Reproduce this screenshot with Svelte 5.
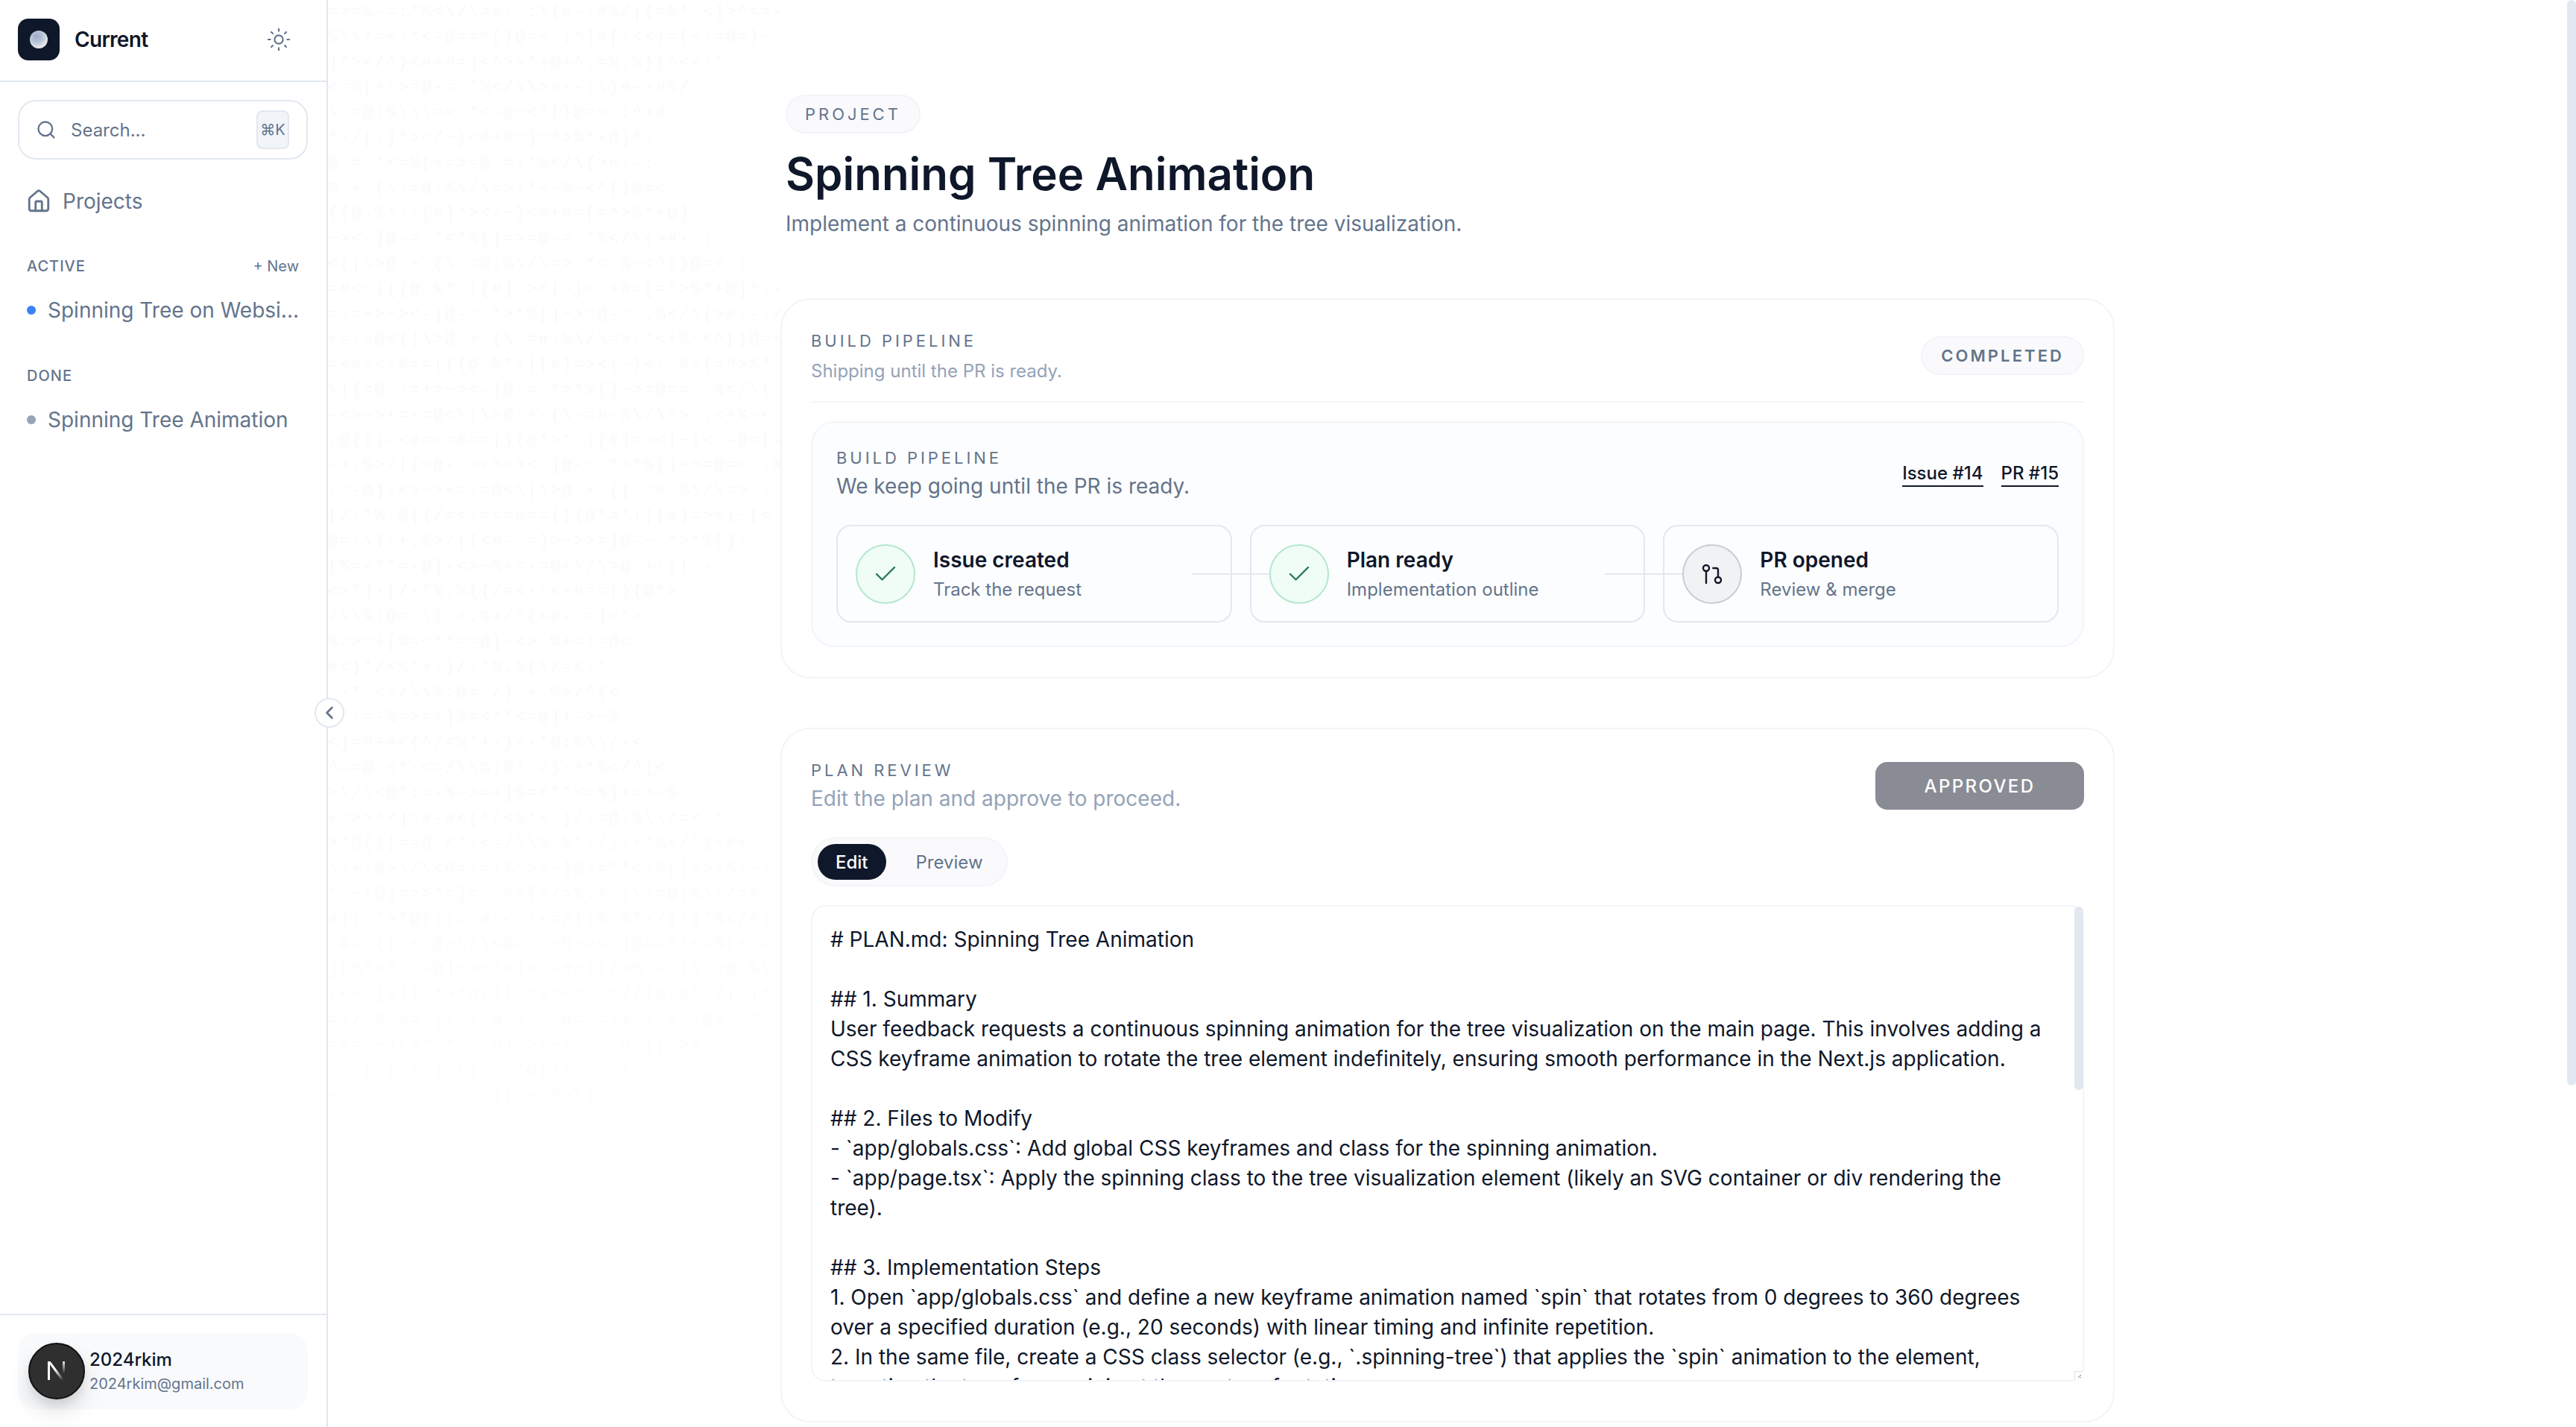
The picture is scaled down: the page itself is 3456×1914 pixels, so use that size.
<script>
	// Faint ascii texture that sits behind the main column
	const asciiRows = String.raw`=>=%-=:*%<\/\>#·-:\{#-·#%/|{=%*.<]>^<=-
%\\/=<:*<-@==^[}@=<.:^]#[-<<|=[<:=@=}~
]*></^}<#+#=]<^>>*+@+^.=%.%}[^<<·*
<=%[+=>=@-=:*%</\\>#·-:\}#-·#%/
\·=@:%\\\=<:*<-@~<^[}@=<.:^+#
*·/[·]*></~}<#+#=]=^>%*+@]^.
@-=.*<=%[+=>=@-=:*%</\{>#·-:
%.+·{\·=@:%\/\=>:*<-%~<^[}@=<
{{@.%*·/[#]*></~}<#+#=[=^>%*+@]
~><-]@-=.*<*%[]=>=@-=:*%</\{>#·-:
<{|\>@.+·{\·=@:%\/\=>:*<-%~<^[}@=<.:
=#<=|{{@.%*·|[#]=><|~}<·+#=[=^>%*+@]^.-
=·=+>~><-]@-=.*>*%[]~>=@-=..%</\{>#·-:/
+=·=@<{|\>@.+·{\·=#·%\/\=>:*<+%~<^[}@=<
=<#=<=#==|{{@.%*:|[#]=><|~}<·-#=[=^>%*
\|{<@-·=+>~><-]@-=.*>*%[]~>=@==..%</\{
-<>~>+=·=@<\|\>@:+·{\·=#·%\/\=>..<+%~<
.@{{|=<#=<=#==|}{@*>*:|[#]=><|~}<·-@=[-
·+.%>/|{<@-·=+>~><=]@-~.*>*%[]~>=@==..%
.=-@]-<>~>+=·=@<\|\>@:+·{{·=#·%\/\=>..
[/·*%.@{{/=<·=<=#==|}{@*>*:|[#]=><|~[<
@=·\}·+.%>/|{<#-·=]>~>>=]@-~.*>*%[]-
[%=<**=-@]-<>~%+=·=@<\/\>@:+·{|·-
<>*]·[/·*%.%{{/=<·=<-#==|}{@*>
/\\%:@=·\}·+.%>/^{<#-·=]<^>
%=>=+[%=<**==@]-<>-%+=:=@<
#<}^/<%*+·}/·*%.%{\/=<·*
 ·*·<=/\\%:@=·/}·+.%>/^{<
 *:=-%=>=+]%=<**<=@]+->~%
<]=#+#<{^/<%*+·}/·*@:%\\/-<
^==@-<*·<=/\\%:@*·/}·+*%</^{<
>\/\<@*:=-%~>=+]%=<**<=%]+=>-%
+=>>^<]=#-#<{^/<%*+·}/·=@:%\\/=<·*
>*@{}|==@-<*·<=/\\%.%*·/}·+*%</^}<#+
\·+:@>\/\<@=:=+%~>=-]@==**<=%[|=>=%-~:
*.~+@]=>>^<]=·-#<{^/>%.+·}\·=@:%\\/=<:
#]|:*>*@{}|==#-<=·<=/{{%.%*·/}·]*%</^}
·#=·{{·+:@>\/\<@=:=+%~><-]@==**<=%[+->
][%*>*.~+@]=>>^<]=·-#<{|/>%.+·}\·=@:%\
|<<=]#]|:*>*@{}|==#=<=·<=/{{@.%*·/|·|*
=\/\%·#=·{{·+:@>\/\<@=·=+%~>><-]@=-.*
=#=>~][%*>*.~-@]=>>~>+=·-@<{|/>%.
-·<[~|<>=]#[|:*>*@{}|==#=<=·<
+<..>-\/\%·#=·{{·+:@>\|\<`;

	const planText = `# PLAN.md: Spinning Tree Animation

## 1. Summary
User feedback requests a continuous spinning animation for the tree visualization on the main page. This involves adding a CSS keyframe animation to rotate the tree element indefinitely, ensuring smooth performance in the Next.js application.

## 2. Files to Modify
- \`app/globals.css\`: Add global CSS keyframes and class for the spinning animation.
- \`app/page.tsx\`: Apply the spinning class to the tree visualization element (likely an SVG container or div rendering the tree).

## 3. Implementation Steps
1. Open \`app/globals.css\` and define a new keyframe animation named \`spin\` that rotates from 0 degrees to 360 degrees over a specified duration (e.g., 20 seconds) with linear timing and infinite repetition.
2. In the same file, create a CSS class selector (e.g., \`.spinning-tree\`) that applies the \`spin\` animation to the element,
targeting the transform-origin at the center of rotation.`;

	const steps = [
		{ title: 'Issue created', sub: 'Track the request', done: true },
		{ title: 'Plan ready', sub: 'Implementation outline', done: true },
		{ title: 'PR opened', sub: 'Review & merge', done: false }
	];
</script>

<div class="app">
	<aside class="sidebar">
		<header class="brand">
			<div class="brand-left">
				<span class="logo"><span class="orb"></span></span>
				<span class="brand-name">Current</span>
			</div>
			<svg class="sun" width="34" height="34" viewBox="0 0 24 24" fill="none" stroke="currentColor" stroke-width="1.5" stroke-linecap="round" stroke-linejoin="round">
				<circle cx="12" cy="12" r="4" />
				<path d="M12 2v2M12 20v2M4.93 4.93l1.41 1.41M17.66 17.66l1.41 1.41M2 12h2M20 12h2M6.34 17.66l-1.41 1.41M19.07 4.93l-1.41 1.41" />
			</svg>
		</header>

		<div class="search">
			<svg width="28" height="28" viewBox="0 0 24 24" fill="none" stroke="currentColor" stroke-width="2" stroke-linecap="round" stroke-linejoin="round">
				<path d="m21 21-4.34-4.34" />
				<circle cx="11" cy="11" r="8" />
			</svg>
			<span class="search-text">Search...</span>
			<kbd>⌘K</kbd>
		</div>

		<nav class="nav-item">
			<svg width="34" height="34" viewBox="0 0 24 24" fill="none" stroke="currentColor" stroke-width="2" stroke-linecap="round" stroke-linejoin="round">
				<path d="M15 21v-8a1 1 0 0 0-1-1h-4a1 1 0 0 0-1 1v8" />
				<path d="M3 10a2 2 0 0 1 .709-1.528l7-5.999a2 2 0 0 1 2.582 0l7 5.999A2 2 0 0 1 21 10v9a2 2 0 0 1-2 2H5a2 2 0 0 1-2-2z" />
			</svg>
			<span>Projects</span>
		</nav>

		<section class="group active-group">
			<div class="group-head">
				<span>ACTIVE</span>
				<span class="new">+ New</span>
			</div>
			<div class="project"><i class="dot blue"></i><span class="project-name">Spinning Tree on Websi...</span></div>
		</section>

		<section class="group done-group">
			<div class="group-head"><span>DONE</span></div>
			<div class="project"><i class="dot"></i><span class="project-name">Spinning Tree Animation</span></div>
		</section>

		<footer class="user-area">
			<div class="user-card">
				<div class="avatar">
					<!-- Next.js mark -->
					<svg width="26" height="28" viewBox="0 0 26 28">
						<defs>
							<linearGradient id="diag" x1="0" y1="0" x2="0.75" y2="1">
								<stop offset="0.45" stop-color="#ffffff" />
								<stop offset="1" stop-color="#ffffff" stop-opacity="0" />
							</linearGradient>
							<linearGradient id="side" x1="0" y1="0" x2="0" y2="1">
								<stop offset="0" stop-color="#ffffff" stop-opacity="0.9" />
								<stop offset="1" stop-color="#ffffff" stop-opacity="0" />
							</linearGradient>
						</defs>
						<rect x="1" y="1" width="3" height="25" fill="#ffffff" />
						<polygon points="1,1 4.5,1 25,28 20.5,28" fill="url(#diag)" />
						<rect x="21" y="1" width="3" height="16" fill="url(#side)" />
					</svg>
				</div>
				<div class="user-text">
					<div class="user-name">2024rkim</div>
					<div class="user-mail">2024rkim@gmail.com</div>
				</div>
			</div>
		</footer>

		<button class="collapse" aria-label="Collapse sidebar">
			<svg width="28" height="28" viewBox="0 0 24 24" fill="none" stroke="currentColor" stroke-width="2.2" stroke-linecap="round" stroke-linejoin="round">
				<path d="m15 18-6-6 6-6" />
			</svg>
		</button>
	</aside>

	<main class="main">
		<pre class="ascii" aria-hidden="true">{asciiRows}</pre>

		<div class="column">
			<div class="page-head">
				<span class="pill project-pill">PROJECT</span>
				<h1>Spinning Tree Animation</h1>
				<p>Implement a continuous spinning animation for the tree visualization.</p>
			</div>

			<section class="card">
				<div class="card-head divided">
					<div>
						<div class="eyebrow">BUILD PIPELINE</div>
						<div class="card-sub small">Shipping until the PR is ready.</div>
					</div>
					<span class="pill status">COMPLETED</span>
				</div>

				<div class="pipeline">
					<div class="pipeline-head">
						<div>
							<div class="eyebrow">BUILD PIPELINE</div>
							<div class="pipeline-sub">We keep going until the PR is ready.</div>
						</div>
						<div class="links">
							<a href="#issue">Issue #14</a>
							<a href="#pr">PR #15</a>
						</div>
					</div>

					<div class="steps">
						{#each steps as step, i}
							<div class="step">
								<span class="step-icon" class:done={step.done}>
									{#if step.done}
										<svg width="36" height="36" viewBox="0 0 24 24" fill="none" stroke="currentColor" stroke-width="1.6" stroke-linecap="round" stroke-linejoin="round">
											<path d="M20 6 9 17l-5-5" />
										</svg>
									{:else}
										<svg width="32" height="32" viewBox="0 0 24 24" fill="none" stroke="currentColor" stroke-width="1.8" stroke-linecap="round" stroke-linejoin="round">
											<circle cx="18" cy="18" r="3" />
											<circle cx="6" cy="6" r="3" />
											<path d="M13 6h3a2 2 0 0 1 2 2v7" />
											<line x1="6" x2="6" y1="9" y2="21" />
										</svg>
									{/if}
								</span>
								<div>
									<div class="step-title">{step.title}</div>
									<div class="step-sub">{step.sub}</div>
								</div>
								{#if i < steps.length - 1}
									<span class="connector"></span>
								{/if}
							</div>
						{/each}
					</div>
				</div>
			</section>

			<section class="card review">
				<div class="card-head">
					<div>
						<div class="eyebrow">PLAN REVIEW</div>
						<div class="card-sub">Edit the plan and approve to proceed.</div>
					</div>
					<button class="approved">APPROVED</button>
				</div>

				<div class="tabs">
					<span class="tab on">Edit</span>
					<span class="tab">Preview</span>
				</div>

				<div class="plan-wrap">
					<div class="plan">{planText}</div>
					<span class="plan-thumb"></span>
					<span class="resizer">
						<svg width="12" height="12" viewBox="0 0 12 12" fill="none" stroke="#64748b" stroke-width="1">
							<path d="M9 5 5 9M9 8 8 9" />
						</svg>
					</span>
				</div>
			</section>
		</div>
	</main>

	<!-- page scrollbar thumb, headless chrome draws none of its own -->
	<span class="page-thumb"></span>
</div>

<style>
	:global(body) {
		margin: 0;
		background: #ffffff;
		overflow: hidden;
	}

	.app {
		position: relative;
		display: flex;
		height: 100vh;
		overflow: hidden;
		font-family: Inter, 'Noto Sans', sans-serif;
		color: #0f172a;
	}

	.page-thumb {
		position: absolute;
		top: 0;
		right: 0;
		width: 12px;
		height: 1456px;
		background: #e2e8f0;
		border-radius: 6px;
	}

	/* sidebar */
	.sidebar {
		position: relative;
		z-index: 2;
		flex: 0 0 440px;
		width: 440px;
		min-width: 0;
		box-sizing: border-box;
		display: flex;
		flex-direction: column;
		background: #ffffff;
		border-right: 2px solid #e2e8f0;
	}

	.brand {
		flex: 0 0 110px;
		box-sizing: border-box;
		display: flex;
		align-items: center;
		justify-content: space-between;
		padding: 0 47px 2px 24px;
		border-bottom: 2px solid #e2e8f0;
	}

	.brand-left {
		display: flex;
		align-items: center;
		gap: 20px;
	}

	.logo {
		width: 56px;
		height: 56px;
		border-radius: 14px;
		background: #0f172a;
		display: flex;
		align-items: center;
		justify-content: center;
	}

	.orb {
		width: 24px;
		height: 24px;
		border-radius: 50%;
		background: radial-gradient(circle at 38% 32%, #a4a6cc 0%, #b3c7d6 38%, #e6e4ea 68%, #f6f4f5 100%);
	}

	.brand-name {
		font-size: 28px;
		font-weight: 600;
		letter-spacing: -0.025em;
	}

	.sun {
		color: #64748b;
	}

	.search {
		box-sizing: border-box;
		height: 80px;
		margin: 24px 25px 0 24px;
		padding: 0 23px 0 22px;
		display: flex;
		align-items: center;
		gap: 19px;
		border: 2px solid #e2e8f0;
		border-radius: 24px;
		color: #64748b;
	}

	.search-text {
		flex: 1;
		font-size: 24px;
	}

	kbd {
		box-sizing: border-box;
		width: 44px;
		height: 52px;
		display: flex;
		align-items: center;
		justify-content: center;
		background: #f1f5f9;
		border: 2px solid #e2e8f0;
		border-radius: 8px;
		font-family: Inter, 'DejaVu Sans', sans-serif;
		font-size: 20px;
	}

	.nav-item {
		margin: 20px 24px 0;
		height: 72px;
		padding-left: 11px;
		display: flex;
		align-items: center;
		gap: 15px;
		color: #64748b;
		font-size: 28px;
	}

	.group {
		padding: 0 37px 0 36px;
		color: #64748b;
	}

	.active-group {
		margin-top: 37px;
	}

	.done-group {
		margin-top: 57px;
	}

	.group-head {
		display: flex;
		justify-content: space-between;
		align-items: center;
		height: 28px;
		font-size: 20px;
		font-weight: 500;
		letter-spacing: 0.05em;
	}

	.new {
		letter-spacing: 0;
		font-weight: 400;
	}

	.project {
		margin-top: 28px;
		height: 34px;
		display: flex;
		align-items: center;
		gap: 16px;
		font-size: 28px;
	}

	.project-name {
		white-space: nowrap;
	}

	.dot {
		flex: none;
		width: 12px;
		height: 12px;
		border-radius: 50%;
		background: #94a3b8;
	}

	.dot.blue {
		background: #3b82f6;
	}

	.user-area {
		margin-top: auto;
		padding: 24px 25px 24px 24px;
		border-top: 2px solid #e2e8f0;
	}

	.user-card {
		height: 102px;
		display: flex;
		align-items: center;
		gap: 6px;
		padding-left: 14px;
		background: #f8fafc;
		border-radius: 24px;
	}

	.avatar {
		box-sizing: border-box;
		width: 76px;
		height: 76px;
		flex: none;
		border-radius: 50%;
		background: #2f2f2f;
		border: 2px solid #111111;
		box-shadow: 0 16px 32px -4px rgba(0, 0, 0, 0.16), 0 8px 16px -4px rgba(0, 0, 0, 0.1);
		display: flex;
		align-items: center;
		justify-content: center;
	}

	.user-name {
		font-size: 24px;
		font-weight: 500;
		line-height: 32px;
	}

	.user-mail {
		margin-top: 2px;
		font-size: 20px;
		line-height: 28px;
		color: #64748b;
	}

	.collapse {
		position: absolute;
		top: 936px;
		right: -24px;
		width: 40px;
		height: 40px;
		padding: 0;
		display: flex;
		align-items: center;
		justify-content: center;
		background: #ffffff;
		border: 2px solid #e2e8f0;
		border-radius: 50%;
		color: #64748b;
	}

	/* main column */
	.main {
		position: relative;
		flex: 1;
		min-width: 0;
		box-sizing: border-box;
		padding-right: 12px;
		overflow: hidden;
	}

	.ascii {
		position: absolute;
		top: 0;
		left: 0;
		margin: 0;
		font-family: 'Liberation Mono', monospace;
		font-size: 22px;
		letter-spacing: 2.5px;
		line-height: 33.8px;
		color: #f9f9fa;
		pointer-events: none;
		-webkit-mask-image: linear-gradient(to bottom, #000 70%, rgba(0, 0, 0, 0.45) 100%);
		mask-image: linear-gradient(to bottom, #000 70%, rgba(0, 0, 0, 0.45) 100%);
	}

	.column {
		position: relative;
		box-sizing: border-box;
		width: 1790px;
		margin: 0 auto;
		padding-top: 127px;
	}

	.page-head {
		padding-left: 7px;
		margin-bottom: 80px;
	}

	.pill {
		box-sizing: border-box;
		display: inline-flex;
		align-items: center;
		height: 52px;
		border: 2px solid #f1f5f9;
		border-radius: 999px;
		background: #fafafc;
		color: #64748b;
	}

	.project-pill {
		padding: 0 24px;
		font-size: 22px;
		font-weight: 400;
		letter-spacing: 0.18em;
		vertical-align: top;
	}

	h1 {
		margin: 16px 0 0;
		font-size: 60px;
		line-height: 76px;
		font-weight: 600;
	}

	.page-head p {
		margin: 9px 0 0;
		font-size: 28px;
		line-height: 40px;
		color: #64748b;
	}

	.card {
		box-sizing: border-box;
		padding: 41px 39px 40px;
		border: 2px solid #f1f5f9;
		border-radius: 40px;
		background: #ffffff;
	}

	.card.review {
		margin-top: 66px;
		padding-bottom: 53px;
	}

	.card-head {
		display: flex;
		justify-content: space-between;
		align-items: center;
	}

	.card-head.divided {
		padding-bottom: 24px;
		border-bottom: 2px solid #f1f5f9;
	}

	.eyebrow {
		font-size: 22px;
		line-height: 28px;
		letter-spacing: 0.18em;
		color: #64748b;
	}

	.card-sub {
		margin-top: 4px;
		font-size: 28px;
		line-height: 40px;
		color: #94a3b8;
	}

	.card-sub.small {
		margin-top: 11px;
		font-size: 24px;
		line-height: 32px;
	}

	.status {
		margin-top: -3px;
		padding: 0 25px;
		font-size: 22px;
		font-weight: 600;
		letter-spacing: 0.14em;
	}

	.pipeline {
		box-sizing: border-box;
		margin-top: 25px;
		padding: 33px 32px 31px;
		border: 2px solid #f1f5f9;
		border-radius: 32px;
		background: #fcfdfe;
	}

	.pipeline-head {
		display: flex;
		justify-content: space-between;
		align-items: center;
	}

	.pipeline-sub {
		margin-top: 4px;
		font-size: 28px;
		line-height: 40px;
		color: #64748b;
	}

	.links {
		display: flex;
		gap: 24px;
	}

	.links a {
		color: #0f172a;
		font-size: 24px;
		font-weight: 500;
		line-height: 32px;
		text-decoration: none;
		border-bottom: 2px solid #0f172a;
	}

	.steps {
		display: grid;
		grid-template-columns: repeat(3, 1fr);
		gap: 24px;
		margin-top: 32px;
	}

	.step {
		position: relative;
		box-sizing: border-box;
		height: 131px;
		padding: 0 24px;
		display: flex;
		align-items: center;
		gap: 24px;
		background: #fcfdfe;
		border: 2px solid #e2e8f0;
		border-radius: 20px;
	}

	.step-icon {
		box-sizing: border-box;
		flex: none;
		position: relative;
		z-index: 1;
		width: 80px;
		height: 80px;
		display: flex;
		align-items: center;
		justify-content: center;
		border-radius: 50%;
		background: #f1f2f4;
		border: 2px solid #c9ccd1;
		color: #0f172a;
	}

	.step-icon.done {
		background: #f0fdf6;
		border-color: #b4e7cd;
		color: #2a7a57;
	}

	.step-title {
		font-size: 28px;
		line-height: 36px;
		font-weight: 600;
	}

	.step-sub {
		margin-top: 6px;
		font-size: 24px;
		line-height: 32px;
		color: #64748b;
	}

	.connector {
		position: absolute;
		z-index: 1;
		top: 50%;
		right: -54px;
		width: 106px;
		height: 2px;
		margin-top: -1px;
		background: #e2e8f0;
	}

	.approved {
		box-sizing: border-box;
		width: 280px;
		height: 64px;
		margin-top: -2px;
		border: 0;
		border-radius: 16px;
		background: #898c95;
		color: #ffffff;
		font-family: inherit;
		font-size: 24px;
		font-weight: 500;
		letter-spacing: 0.1em;
	}

	.tabs {
		box-sizing: border-box;
		display: flex;
		width: fit-content;
		align-items: center;
		gap: 16px;
		height: 66px;
		margin-top: 32px;
		padding: 0 7px;
		border: 2px solid #f1f5f9;
		border-radius: 999px;
		background: #fafafc;
	}

	.tab {
		height: 48px;
		padding: 0 24px;
		display: flex;
		align-items: center;
		border-radius: 999px;
		font-size: 24px;
		font-weight: 400;
		color: #64748b;
	}

	.tab.on {
		background: #0f172a;
		color: #ffffff;
		font-weight: 500;
	}

	.plan-wrap {
		position: relative;
		margin-top: 25px;
	}

	.plan {
		box-sizing: border-box;
		height: 639px;
		padding: 24px 40px 0 24px;
		border: 2px solid #f1f5f9;
		border-radius: 20px;
		font-size: 28px;
		line-height: 40px;
		white-space: pre-wrap;
		overflow: hidden;
	}

	.plan-thumb {
		position: absolute;
		top: 2px;
		right: 1px;
		width: 12px;
		height: 246px;
		background: #e2e8f0;
		border-radius: 6px;
	}

	.resizer {
		position: absolute;
		right: 1px;
		bottom: 2px;
		width: 12px;
		height: 12px;
		display: flex;
		background: #ffffff;
		box-shadow: inset 1px 1px 0 #dde1e7;
	}
</style>
